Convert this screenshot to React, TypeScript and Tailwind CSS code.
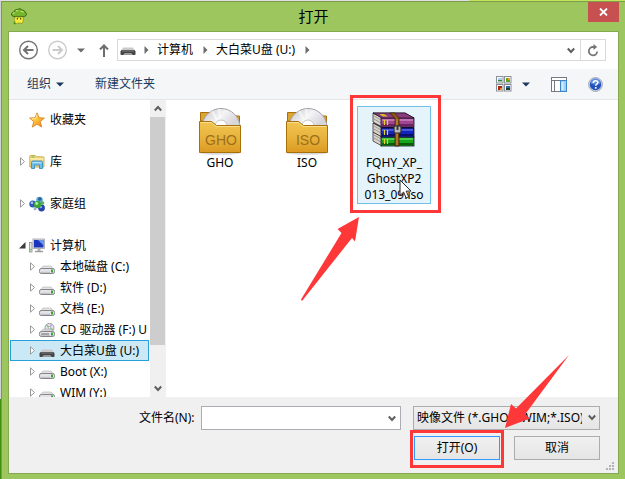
import type { ReactNode } from 'react'

type DriveKind = 'disk' | 'cd' | 'usb'

const drives: { name: string; kind: DriveKind; selected?: boolean }[] = [
  { name: '本地磁盘 (C:)', kind: 'disk' },
  { name: '软件 (D:)', kind: 'disk' },
  { name: '文档 (E:)', kind: 'disk' },
  { name: 'CD 驱动器 (F:) U', kind: 'cd' },
  { name: '大白菜U盘 (U:)', kind: 'usb', selected: true },
  { name: 'Boot (X:)', kind: 'disk' },
  { name: 'WIM (Y:)', kind: 'disk' },
]

function MushroomIcon() {
  return (
    <svg width="16" height="17" viewBox="0 0 16 17">
      <path d="M4 8.500c-.6 2-.8 4 .2 5.300l-.8 1.200 1.600 1 1.500-.9h3l1.500.5.6-1.200c1-1.500.8-4 .2-6z" fill="#f6ee3a" stroke="#8b8a1c" strokeWidth=".7" />
      <path d="M.6 7C.2 5.200 1.500 3.800 3.300 3.900 3.200 2.200 5 .8 6.700 1.600 8 .2 10.400.6 10.900 2.200c1.800-.4 3.200.7 3.100 2.200 1.700.4 2.100 2 .9 3.200-1.200 1.100-3 1.200-4.300.7-1.400.9-3.600 1-4.900 0C4 9.300 1.300 8.700.6 7z" fill="#74b52c" stroke="#2f5310" strokeWidth=".8" />
      <path d="M2 6c0-1 1-1.400 2-1.200M5 3.200c.8-.7 1.700-.7 2.300-.3M9.500 3.500c1.500-.5 2.500 0 3 1" fill="none" stroke="#c5ea6c" strokeWidth="1.100" />
      <path d="M6.300 9.700v1.800M9.700 9.700v1.800" stroke="#3d3d10" strokeWidth="1.100" />
      <path d="M2.800 14.500l1.700 1.300" stroke="#4d8a14" strokeWidth="1.600" />
    </svg>
  )
}

function NavCircle({ color, flip }: { color: string; flip?: boolean }) {
  return (
    <svg width="20" height="20" viewBox="0 0 20 20" fill="none" stroke={color}>
      <circle cx="9.500" cy="10" r="8.800" strokeWidth="1.400" />
      <path d={flip ? 'M4.500 10h9M10 6l4 4-4 4' : 'M14.500 10h-9M9 6l-4 4 4 4'} strokeWidth="2" />
    </svg>
  )
}

function DownTriangle({ color }: { color: string }) {
  return (
    <svg width="8" height="5" viewBox="0 0 8 5">
      <path d="M0 .5h8l-4 4z" fill={color} />
    </svg>
  )
}

function CrumbArrow() {
  return (
    <svg width="5" height="8" viewBox="0 0 5 8">
      <path d="M.5 0v8l4-4z" fill="#6d6d6d" />
    </svg>
  )
}

function Chevron({ up, className = '' }: { up?: boolean; className?: string }) {
  return (
    <svg className={className} width="8" height="7" viewBox="0 0 8 7" fill="none" stroke="#5f5f5f" strokeWidth="2">
      <path d={up ? 'M.8 5.500L4 2l3.200 3.500' : 'M.8 1.500L4 5l3.200-3.500'} />
    </svg>
  )
}

function DriveIcon({ kind }: { kind: DriveKind }) {
  if (kind === 'usb') {
    return (
      <svg width="16" height="16" viewBox="0 0 16 16">
        <path d="M3 5.500h10l2.500 4.500h-15z" fill="#c9c9c9" />
        <path d="M.5 9.500c0-.8 1-1.500 2-1.500h11c1 0 2 .7 2 1.500v2.700c0 .5-.4.800-1 .800h-2l-1-1.500h-7L3.500 13h-2c-.6 0-1-.3-1-.8z" fill="#454545" />
        <path d="M2 9h12" stroke="#8a8a8a" strokeWidth=".8" />
        <path d="M3.500 13l1-1.500h7l1 1.500z" fill="#999" />
      </svg>
    )
  }
  return (
    <svg width="16" height="16" viewBox="0 0 16 16">
      {kind === 'cd' && (
        <>
          <circle cx="10.500" cy="4.800" r="4.500" fill="#dfe5e8" stroke="#8e8e8e" strokeWidth=".8" />
          <path d="M10.500 4.800l-3-3M10.500 4.800l3.500 2" stroke="#6fbf73" strokeWidth="1.200" />
          <path d="M10.500 4.800l2-3.300" stroke="#c78bd0" strokeWidth="1.200" />
          <circle cx="10.500" cy="4.800" r="1.300" fill="#fff" stroke="#8e8e8e" strokeWidth=".6" />
        </>
      )}
      <path d="M4 6h8l3 3.500H1z" fill={kind === 'cd' ? '#cfcfcfcc' : '#e2e2e2'} stroke="#b4b4b4" strokeWidth=".6" />
      <rect x=".5" y="8.500" width="15" height="5" rx="1.800" fill="#e4e4e8" stroke="#85858a" />
      <path d="M2 12.300h9" stroke="#bcbcc2" />
      <rect x="12" y="9.500" width="2" height="3" fill="#37a537" />
      {kind === 'cd' && <path d="M2 11h8" stroke="#6b6b6b" />}
    </svg>
  )
}

function StarIcon() {
  return (
    <svg width="16" height="16" viewBox="0 0 16 16">
      <defs>
        <linearGradient id="star" x1="0" y1="0" x2="1" y2="1">
          <stop offset="0" stopColor="#ffe65c" />
          <stop offset=".45" stopColor="#ffc63a" />
          <stop offset="1" stopColor="#f07818" />
        </linearGradient>
      </defs>
      <path d="M8 .8l2 4.900 5.400.4-4.200 3.500 1.500 5.500L8 12.100l-4.700 3 1.500-5.500L.6 6.100 6 5.700z" fill="url(#star)" stroke="#d9822b" strokeWidth=".9" />
      <path d="M8 2.500L6.700 6.500l-4 .3" fill="none" stroke="#fff6b0" strokeWidth=".8" />
    </svg>
  )
}

function LibraryIcon() {
  return (
    <svg width="16" height="16" viewBox="0 0 16 16">
      <path d="M.8 2.500c0-.6.400-1 1-1h4.400l1 1.300H14c.6 0 1 .4 1 1V13H.8z" fill="#f3dd83" stroke="#c7a449" strokeWidth=".9" />
      <path d="M2.500 3h3" stroke="#6db04c" />
      <path d="M1.300 5h13.300" stroke="#fff3bf" />
      <path d="M4 7h8c1 0 1.500.5 1.500 1.300v6.200h-3v-3.500h-5v3.500h-3V8.300C2.500 7.500 3 7 4 7z" fill="#6cc0ea" stroke="#3b8dbf" strokeWidth=".9" />
      <path d="M3.500 8.700h9" stroke="#c8ebfb" />
    </svg>
  )
}

function HomegroupIcon() {
  return (
    <svg width="16" height="16" viewBox="0 0 16 16">
      <circle cx="10.500" cy="4" r="3.300" fill="#5ba8cf" />
      <circle cx="10.800" cy="3" r="1.800" fill="#27649e" />
      <circle cx="3.800" cy="8" r="3.500" fill="#3157c4" />
      <circle cx="3" cy="6.800" r="1.300" fill="#a9c4f5" />
      <circle cx="12.500" cy="12" r="3.400" fill="#2744ac" />
      <circle cx="11.800" cy="11" r="1.300" fill="#8fb1f2" />
      <circle cx="8.500" cy="8.700" r="3.600" fill="#3ba33a" />
      <circle cx="7.700" cy="7.500" r="1.400" fill="#baf0a4" />
      <circle cx="13.500" cy="7" r="1.800" fill="#57ae58" />
      <circle cx="6" cy="12.800" r="1.500" fill="#9fb0d8" />
    </svg>
  )
}

function ComputerIcon() {
  return (
    <svg width="16" height="16" viewBox="0 0 16 16">
      <rect x=".5" y="4.500" width="2.500" height="9.500" fill="#e3e3e3" stroke="#8b8b8b" strokeWidth=".8" />
      <rect x="1.200" y="11" width="1.200" height="1.200" fill="#3fb43f" />
      <rect x="4" y="1" width="11.500" height="9.500" fill="#dcdcdc" stroke="#9da1aa" strokeWidth=".8" />
      <rect x="5" y="2" width="9.500" height="7.500" fill="#1b35bd" />
      <path d="M9 2h5.500v5.500z" fill="#6c95ee" />
      <path d="M8.500 10.700h3V13h-3z" fill="#b0b0b0" />
      <path d="M6 13.500h8" stroke="#9c9c9c" strokeWidth="1.500" />
    </svg>
  )
}

function ViewIcon() {
  return (
    <svg width="16" height="16" viewBox="0 0 16 16">
      {[[0, 0], [8, 0], [0, 8], [8, 8]].map(([x, y]) => (
        <rect key={`${x}-${y}`} x={x + 0.5} y={y + 0.5} width="6.500" height="6.500" fill="#fff" stroke="#8a8f96" />
      ))}
      <path d="M2 2h4v2H2z" fill="#a9ccec" />
      <path d="M2 4h4v1.500H2z" fill="#2d8a4b" />
      <path d="M10 2h4v4h-4z" fill="#62a51d" />
      <path d="M12 2h2v2h-2z" fill="#e7a61f" />
      <path d="M2 10h4v4H2z" fill="#a52a12" />
      <path d="M4 12h2v2H4z" fill="#f08c24" />
      <path d="M10 10h4v4h-4z" fill="#3467a3" />
      <path d="M10 12h4v2h-4z" fill="#1c3d34" />
    </svg>
  )
}

function PreviewIcon() {
  return (
    <svg width="16" height="15" viewBox="0 0 16 15">
      <rect x=".5" y=".5" width="15" height="14" fill="#fff" stroke="#747a82" />
      <path d="M1 3.500h14M3.500 4v10" stroke="#747a82" />
      <rect x="9.500" y="3.500" width="6" height="11" fill="#9fd0f8" stroke="#3c86cc" />
      <path d="M11.500 5v8" stroke="#d8eefe" strokeWidth="2" />
    </svg>
  )
}

function HelpIcon() {
  return (
    <svg width="15" height="15" viewBox="0 0 15 15">
      <circle cx="7.500" cy="7.500" r="6.900" fill="#d5dbe8" stroke="#8c95ab" strokeWidth=".8" />
      <circle cx="7.500" cy="7.500" r="5.700" fill="#2453bd" />
      <path d="M2.500 6.500a5 5 0 0 1 10 0c-3 1.500-7 1.500-10 0z" fill="#5d8be0" />
      <path d="M5.300 6c0-3 4.600-2.900 4.600-.4 0 1.500-2.200 1.500-2.200 3.200" fill="none" stroke="#fff" strokeWidth="1.600" />
      <rect x="6.900" y="10" width="1.700" height="1.700" fill="#fff" />
    </svg>
  )
}

function DiscFolder({ label }: { label: string }) {
  return (
    <svg width="44" height="48" viewBox="0 0 44 48">
      <defs>
        <linearGradient id="folder" x1="0" y1="0" x2="0" y2="1">
          <stop offset="0" stopColor="#f0c550" />
          <stop offset=".5" stopColor="#e8b43e" />
          <stop offset="1" stopColor="#dc9a22" />
        </linearGradient>
        <linearGradient id="disc" x1="0" y1="0" x2="1" y2="1">
          <stop offset="0" stopColor="#c4c4c8" />
          <stop offset=".35" stopColor="#f4f4f6" />
          <stop offset=".6" stopColor="#d8d4dc" />
          <stop offset="1" stopColor="#a5ecd8" />
        </linearGradient>
      </defs>
      <ellipse cx="22" cy="46" rx="20" ry="1.800" fill="#d9d9d9" />
      <path d="M2.500 14V5.500h9V9h30v7z" fill="#dda530" stroke="#a8700c" />
      <circle cx="23" cy="20.500" r="19" fill="url(#disc)" stroke="#a3a3a8" />
      <path d="M23 20L14 4M23 20l-2-18" stroke="#fff" strokeWidth="2" opacity=".6" />
      <circle cx="23" cy="19" r="6" fill="#fff" stroke="#c3c3c6" />
      <path d="M1.500 14.500h12l5 4h24v27h-41z" fill="url(#folder)" stroke="#a8700c" />
      <path d="M2.500 15.500h10.700l5 4h23.300" fill="none" stroke="#f8dd8c" />
      <text x="23" y="38" textAnchor="middle" fontFamily="Liberation Sans" fontSize="14" fill="#9c701a">{label}</text>
    </svg>
  )
}

function ArchiveIcon() {
  const books = [
    { y: 0, dark: '#6b2363', main: '#a0458f', light: '#d892cb' },
    { y: 10, dark: '#07106e', main: '#1423bb', light: '#6a7df0' },
    { y: 19, dark: '#0b5c0b', main: '#17a51a', light: '#6fe36b' },
  ]
  return (
    <svg width="44" height="36" viewBox="0 0 44 36">
      {books.slice().reverse().map((b) => (
        <g key={b.y}>
          <path d={`M1 ${b.y + 1}h32l9 5H10z`} fill={b.dark} stroke="#1d1020" strokeWidth=".7" />
          <path d={`M1 ${b.y + 1}l9 5v9l-9-5z`} fill="#d9d4cb" stroke="#3b3036" strokeWidth=".8" />
          <path d={`M2 ${b.y + 4}l7 4M2 ${b.y + 7}l7 4`} stroke="#8b8580" strokeWidth=".8" />
          <rect x="9" y={b.y + 6} width="33" height="9" fill={b.main} stroke="#160d24" strokeWidth=".8" />
          <path d={`M10 ${b.y + 8}h31`} stroke={b.light} strokeWidth="1.200" />
          <path d={`M10 ${b.y + 13}h31`} stroke={b.dark} strokeWidth="2" />
          <path d={`M12.500 ${b.y + 8}v5M15.500 ${b.y + 8}v5`} stroke="#e6d429" strokeWidth="1.200" />
        </g>
      ))}
      <path d="M1 1h32l9 5H10z" fill="#8b3a7e" stroke="#1d1020" strokeWidth=".7" />
      <path d="M7 2h5l4 2.500h-5z" fill="#d8bd22" />
      <path d="M18 1h5l4 5v28h-4V6.500z" fill="#8c5717" stroke="#3d2409" strokeWidth=".8" />
      <path d="M25 7v26" stroke="#d39a40" />
      <rect x="22" y="14" width="7" height="7" rx="1.500" fill="#b9b9b9" stroke="#303030" strokeWidth="1.200" />
      <path d="M25.500 13v5" stroke="#3a3a3a" strokeWidth="2" />
    </svg>
  )
}

function TreeRow({ icon, label, open, expandable = true, child, selected }: {
  icon: ReactNode
  label: string
  open?: boolean
  expandable?: boolean
  child?: boolean
  selected?: boolean
}) {
  return (
    <div
      className={`mx-px flex h-[21px] shrink-0 items-center border whitespace-nowrap ${child ? 'pl-[18px]' : 'pl-2'} ${
        selected ? 'border-[#26a0da] bg-[#cbe8f6]' : 'border-transparent'
      }`}
    >
      <span className="w-[10px] shrink-0">
        {expandable && (
          <svg width="8" height="9" viewBox="0 0 8 9">
            {open ? <path d="M6.500 1v6.500H0z" fill="#3b3b3b" /> : <path d="M1.500.8v7.400l4-3.700z" fill="#fff" stroke="#9a9a9a" />}
          </svg>
        )}
      </span>
      <span className={`mr-[5px] shrink-0 ${child ? 'pt-[3px]' : ''}`}>{icon}</span>
      <span>{label}</span>
    </div>
  )
}

function Sidebar() {
  return (
    <div className="flex w-[157px] shrink-0 border-r border-[#f0f0f0]">
      <nav className="flex min-w-0 flex-1 flex-col gap-[21px] overflow-hidden pt-[9px]">
        <TreeRow icon={<StarIcon />} label="收藏夹" expandable={false} />
        <TreeRow icon={<LibraryIcon />} label="库" />
        <TreeRow icon={<HomegroupIcon />} label="家庭组" />
        <div>
          <TreeRow icon={<ComputerIcon />} label="计算机" open />
          {drives.map((d) => (
            <TreeRow key={d.name} icon={<DriveIcon kind={d.kind} />} label={d.name} selected={d.selected} child />
          ))}
        </div>
      </nav>
      <div className="flex w-[15px] flex-col bg-[#f0f0f0]">
        <div className="flex h-[17px] items-center justify-center"><Chevron up /></div>
        <div className="flex-1 bg-[#cdcdcd]" />
        <div className="flex h-[52px] items-end justify-center pb-[5px]"><Chevron /></div>
      </div>
    </div>
  )
}

function FileTile({ icon, children }: { icon: ReactNode; children: ReactNode }) {
  return (
    <div className="flex w-[74px] flex-col items-center border border-transparent text-center">
      <div className="flex h-12 items-center">{icon}</div>
      <div>{children}</div>
    </div>
  )
}

function FileList() {
  return (
    <div className="flex flex-1 items-start gap-[13px] pt-[6px] pl-[17px]">
      <FileTile icon={<DiscFolder label="GHO" />}>GHO</FileTile>
      <FileTile icon={<DiscFolder label="ISO" />}>ISO</FileTile>
      <div className="relative">
        <div className="flex h-[98px] w-[74px] flex-col items-center border border-[#70c0e7] bg-[#e5f3fb] text-center">
          <div className="flex h-12 items-center pb-[3px]"><ArchiveIcon /></div>
          <div>FQHY_XP_<br />GhostXP2<br />013_09.iso</div>
        </div>
        <div className="absolute -top-[11px] -right-[10px] -bottom-[9px] -left-[7px] border-[3px] border-[#fe3838]" />
        <svg className="absolute top-[73px] left-[42px]" width="13" height="20" viewBox="0 0 13 20">
          <path d="M1 1v15.500l3.600-3.400 2.500 5.800 2.600-1.100-2.500-5.700H12z" fill="#fff" stroke="#222" strokeWidth="1" />
        </svg>
        <svg className="absolute top-[111px] -left-[57px]" width="60" height="86" viewBox="0 0 60 86">
          <path d="M59 0L37.500 12l4 4L1 82.500l1 1.500L52 21l3 3.500z" fill="#fe3838" />
        </svg>
      </div>
    </div>
  )
}

function AddressBar() {
  return (
    <div className="flex h-[37px] items-start pt-[7px] pr-3 pl-[10px]">
      <div className="flex h-[22px] items-center">
        <button aria-label="后退"><NavCircle color="#737373" /></button>
        <button aria-label="前进" className="ml-[9px]"><NavCircle color="#cbcbcb" flip /></button>
        <button aria-label="最近浏览的位置" className="ml-[9px]"><DownTriangle color="#6d6d6d" /></button>
        <button aria-label="上移" className="ml-[14px]">
          <svg width="10" height="13" viewBox="0 0 10 13" fill="none" stroke="#6d6d6d" strokeWidth="2">
            <path d="M5 13V2M1 5.500l4-4 4 4" />
          </svg>
        </button>
      </div>
      <div className="ml-2 flex h-[22px] flex-1 items-center border border-[#d9d9d9] pl-[2px]">
        <DriveIcon kind="usb" />
        <span className="ml-2"><CrumbArrow /></span>
        <button className="ml-2">计算机</button>
        <span className="ml-[10px]"><CrumbArrow /></span>
        <button className="ml-2">大白菜U盘 (U:)</button>
        <span className="ml-[10px]"><CrumbArrow /></span>
        <button aria-label="展开地址" className="ml-auto pr-[5px]"><Chevron /></button>
        <button aria-label="刷新" className="flex h-full w-[25px] items-center justify-center border-l border-[#d9d9d9]">
          <svg width="12" height="13" viewBox="0 0 12 13" fill="none" stroke="#757575" strokeWidth="1.800">
            <path d="M8 3H5.500a4.200 4.200 0 1 0 4.700 4.500" />
            <path d="M6.500 0l3.700 3-3.700 3z" fill="#757575" stroke="none" />
          </svg>
        </button>
      </div>
    </div>
  )
}

function Toolbar() {
  return (
    <div className="flex h-[31px] items-center border-b border-[#e4e6e8] bg-[#f4f6f8] pr-[15px] pl-[18px] text-[#1e395b]">
      <button className="flex items-center gap-[5px]">组织 <DownTriangle color="#1e395b" /></button>
      <button className="ml-[31px]">新建文件夹</button>
      <button aria-label="更改视图" className="ml-auto flex items-center gap-[10px]">
        <ViewIcon />
        <DownTriangle color="#1e395b" />
      </button>
      <button aria-label="显示预览窗格" className="ml-[21px]"><PreviewIcon /></button>
      <button aria-label="帮助" className="ml-[21px]"><HelpIcon /></button>
    </div>
  )
}

function Footer() {
  return (
    <div className="relative flex flex-col gap-[6px] bg-[#f0f0f0] pt-[9px] pr-[18px] pb-[13px] pl-[130px]">
      <div className="flex items-center">
        <label htmlFor="file-name" className="mr-[6px]">文件名(N):</label>
        <input id="file-name" type="text" className="h-6 min-w-0 flex-1 border border-[#abadb3] bg-white px-1 outline-none" />
        <Chevron className="-ml-[13px]" />
        <div className="relative ml-[17px] w-[187px]">
          <select
            aria-label="文件类型"
            className="block h-6 w-full appearance-none overflow-hidden border border-[#acacac] bg-linear-to-b from-[#f0f0f0] to-[#e5e5e5] pr-[17px] pl-[3px]"
          >
            <option>映像文件 (*.GHO;*.WIM;*.ISO)</option>
          </select>
          <Chevron className="pointer-events-none absolute top-2 right-1" />
        </div>
      </div>
      <div className="flex justify-end gap-[14px]">
        <div className="relative">
          <button className="block h-6 w-[86px] border border-[#3399ff] bg-linear-to-b from-[#f0f0f0] to-[#e5e5e5]">打开(O)</button>
          <div className="pointer-events-none absolute -top-[6px] -right-1 -bottom-2 -left-1 border-[3px] border-[#fe3838]" />
          <svg className="pointer-events-none absolute -top-[81px] left-[91px]" width="65" height="74" viewBox="0 0 65 74">
            <path d="M0 73L6 49l5 4.500L64 0 20 59.500l5 4z" fill="#fe3838" />
          </svg>
        </div>
        <button className="h-6 w-[86px] border border-[#acacac] bg-linear-to-b from-[#f0f0f0] to-[#e5e5e5]">取消</button>
      </div>
      <svg className="absolute right-[3px] bottom-[2px]" width="9" height="9" viewBox="0 0 9 9" fill="#b4b4b4">
        {[[6, 0], [3, 3], [6, 3], [0, 6], [3, 6], [6, 6]].map(([x, y]) => (
          <rect key={`${x}-${y}`} x={x} y={y} width="2" height="2" />
        ))}
      </svg>
    </div>
  )
}

export default function App() {
  return (
    <div className="flex h-screen flex-col overflow-hidden font-['Noto_Sans','Noto_Sans_CJK_SC',sans-serif] text-[12px] leading-4 text-black">
      <div className="flex h-px shrink-0">
        <div className="flex-3 bg-[#dedfe3]" />
        <div className="flex-1 bg-[#c4e45a]" />
      </div>
      <div className="flex min-h-0 flex-1">
        <div className="flex w-px shrink-0 flex-col">
          <div className="flex-5 bg-[#cfd2d6]" />
          <div className="flex-1 bg-[#3f8f10]" />
        </div>
        <div className="flex min-w-0 flex-1 flex-col border-t border-l border-[#7c9c4b] bg-[#9dc65f] pr-[6px] pb-[5px] pl-[6px]">
          <header className="relative flex h-[29px] shrink-0 items-center justify-center pb-[2px]">
            <span className="absolute top-[6px] left-[3px]"><MushroomIcon /></span>
            <h1 className="text-[15px] leading-5">打开</h1>
            <button aria-label="关闭" className="absolute top-0 right-0 flex h-5 w-[31px] items-center justify-center bg-[#c75050]">
              <svg width="9" height="8" viewBox="0 0 9 8" stroke="#fff" strokeWidth="1.800">
                <path d="M1 .5l7 7M8 .5l-7 7" />
              </svg>
            </button>
          </header>
          <main className="flex min-h-0 flex-1 flex-col border border-[#84a950] bg-white">
            <AddressBar />
            <Toolbar />
            <div className="flex min-h-0 flex-1">
              <Sidebar />
              <FileList />
            </div>
            <Footer />
          </main>
        </div>
      </div>
    </div>
  )
}
